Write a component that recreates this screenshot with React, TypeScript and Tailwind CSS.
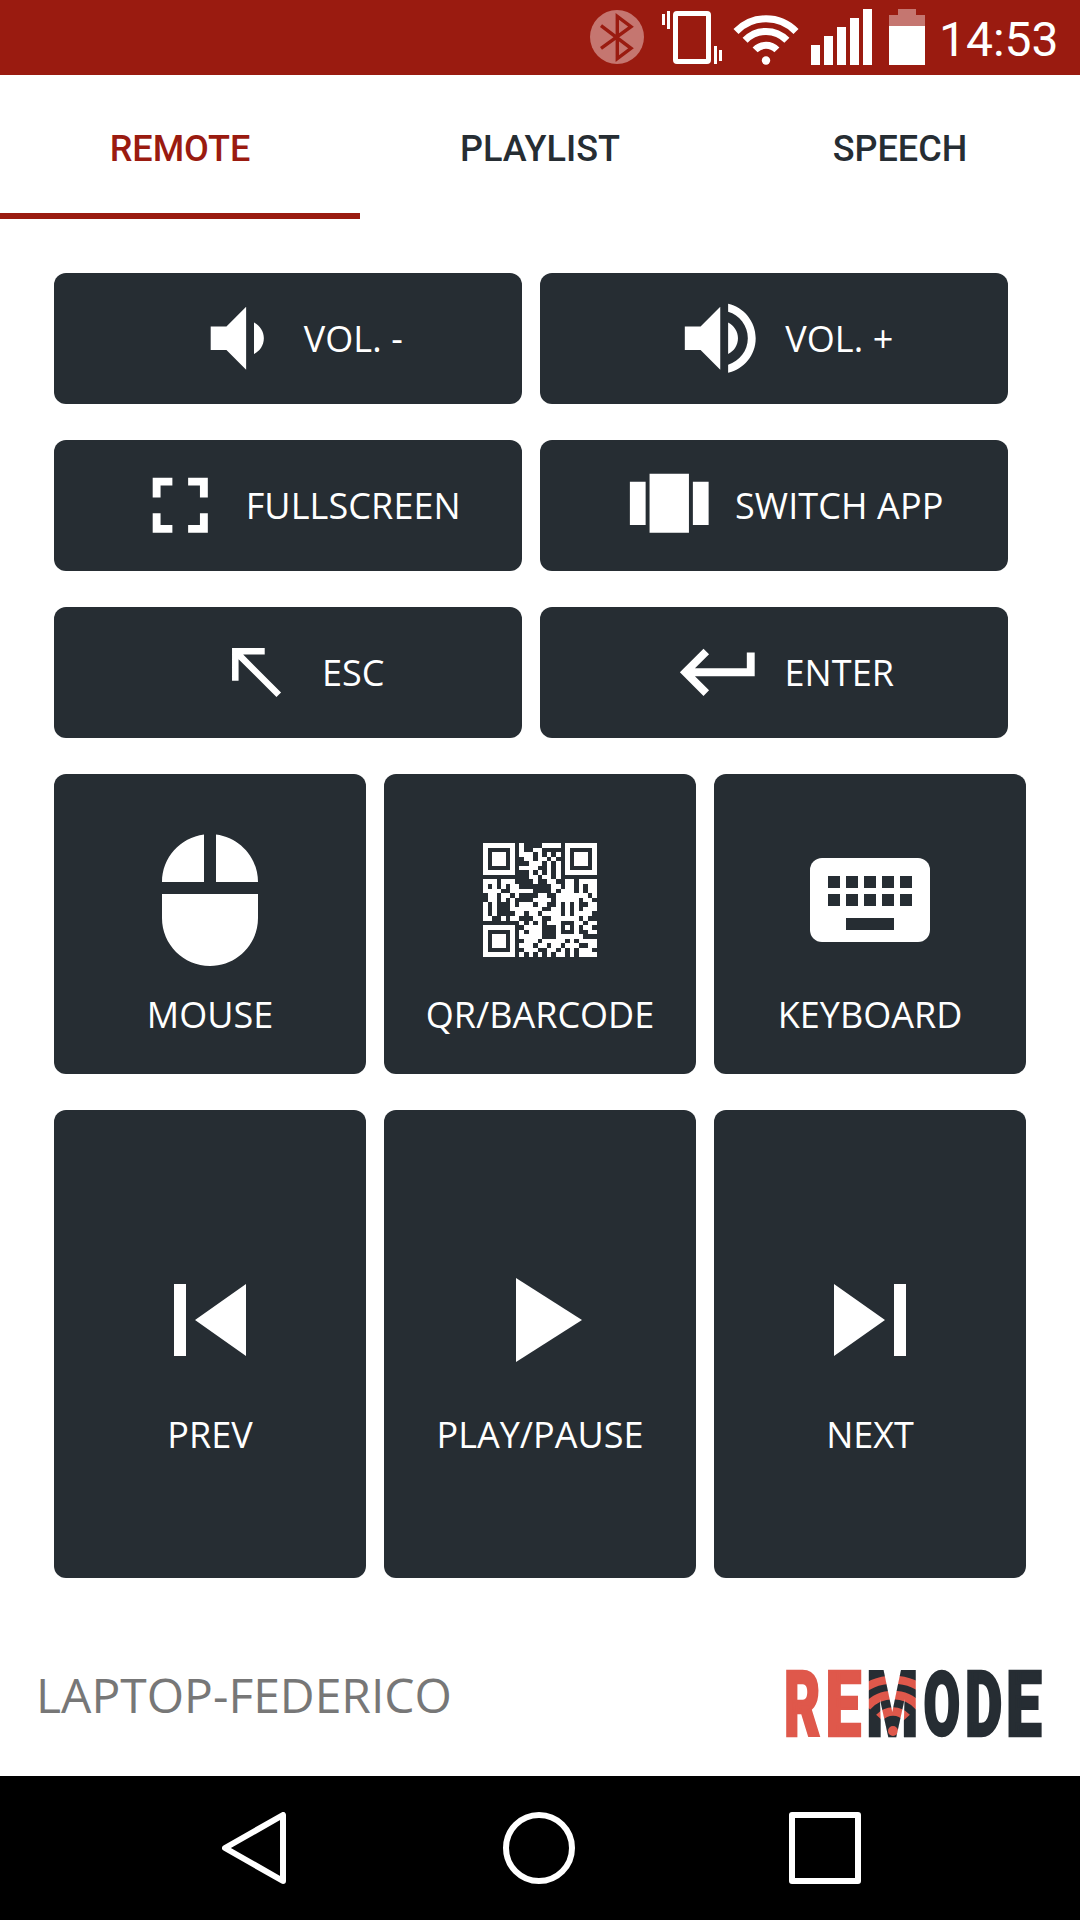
import React from "react";

// 1 = light module, 0 = button background
const QR_ROWS = [
  "1111111010000111101111111",
  "1000001010011000001000001",
  "1011101011101010101011101",
  "1011101001101101001011101",
  "1011101000111010101011101",
  "1000001011110010101000001",
  "1111111000101010101111111",
  "0000000000110110100000000",
  "1110111000010011001101111",
  "1010101100000001101101011",
  "1111001111100001011101011",
  "0110110100001100111111101",
  "0110101000011110111110110",
  "1010001011101100101010011",
  "1010001111111001101010111",
  "1010000110110111101011110",
  "1100101100011001111110100",
  "0000000010101011100011011",
  "1111111001111000101010110",
  "1000001010111000100010011",
  "1011101011111000111111000",
  "1011101001110111110101111",
  "1011101011101101101110011",
  "1000001001110011010101110",
  "1111111010101010110101111",
];

const SIGNAL_BARS = [
  { id: 1, height: "h-[20px]" },
  { id: 2, height: "h-[29px]" },
  { id: 3, height: "h-[38px]" },
  { id: 4, height: "h-[47px]" },
  { id: 5, height: "h-[56px]" },
];

const KEY_COLUMNS = [5, 8, 11, 14, 17];

function StatusBar() {
  return (
    <div className="flex h-[75px] bg-[#9a1b10] pl-[590px] text-white">
      <svg className="mt-[10px] h-[54px] w-[54px] shrink-0" viewBox="0 0 54 54" fill="none">
        <circle cx="27" cy="27" r="27" fill="#c57670" />
        <path d="M11 15.7 41 38.3 27.3 48.5V6.5L41 16.7 11 38.3" stroke="#9a1b10" strokeWidth="3.4" />
      </svg>
      <svg className="ml-[18px] mt-[11px] h-[53px] w-[60px] shrink-0" viewBox="0 0 60 53" fill="currentColor">
        <path d="M0 3h3v11H0zM5 0h3v18H5zM52 35h3v18h-3zM57 39h3v11h-3z" />
        <rect x="13.5" y="2.5" width="33" height="48" rx="1.5" fill="none" stroke="currentColor" strokeWidth="5" />
      </svg>
      <svg className="ml-[11px] mt-[10px] h-[56px] w-[66px] shrink-0" viewBox="0 0 66 56" fill="none" stroke="currentColor" strokeWidth="7">
        <path d="M3 21.5a41.7 41.7 0 0 1 60 0M12.1 30.3a29 29 0 0 1 41.8 0M22.1 39.9a15.2 15.2 0 0 1 21.8 0" />
        <circle cx="33" cy="50.5" r="4.2" fill="currentColor" stroke="none" />
      </svg>
      <div className="ml-[12px] flex h-[65px] items-end gap-[4px]">
        {SIGNAL_BARS.map((bar) => (
          <div key={bar.id} className={`w-[9px] bg-white ${bar.height}`} />
        ))}
      </div>
      <div className="ml-[17px] flex h-[65px] w-[36px] flex-col items-center justify-end">
        <div className="h-[6px] w-[18px] bg-[#c57670]" />
        <div className="h-[11px] w-full bg-[#c57670]" />
        <div className="h-[39px] w-full bg-white" />
      </div>
      <span className="ml-[14px] mt-[12px] font-[Roboto,sans-serif] text-[48px] leading-[56px]">14:53</span>
    </div>
  );
}

function Tabs() {
  const tabs = ["REMOTE", "PLAYLIST", "SPEECH"];
  return (
    <nav className="grid h-[144px] grid-cols-3 font-[Roboto,sans-serif] text-[36px] font-medium">
      {tabs.map((tab, i) => (
        <button
          key={tab}
          className={
            i === 0
              ? "flex items-center justify-center border-b-[6px] border-[#9a1b10] pt-[10px] text-[#9a1b10]"
              : "flex items-center justify-center border-b-[6px] border-transparent pt-[10px] text-[#262d33]"
          }
        >
          {tab}
        </button>
      ))}
    </nav>
  );
}

function WideButton({ label, children }: { label: string; children: React.ReactNode }) {
  return (
    <button className="flex h-[131px] w-[468px] items-center justify-center gap-[18px] rounded-xl bg-[#262d33] pl-[18px]">
      <svg className="h-[94.5px] w-[94.5px]" viewBox="0 0 24 24" fill="currentColor">
        {children}
      </svg>
      <span className="leading-[49px] tracking-[0.1px]">{label}</span>
    </button>
  );
}

function TileButton({ label, children }: { label: string; children: React.ReactNode }) {
  return (
    <button className="flex flex-col items-center justify-center gap-[18px] rounded-xl bg-[#262d33] pt-[18px]">
      <svg className="h-[144px] w-[144px]" viewBox="0 0 24 24" fill="currentColor">
        {children}
      </svg>
      <span className="leading-[49px]">{label}</span>
    </button>
  );
}

function QrCode() {
  // 19 units wide, centred in the 24 unit icon box
  return (
    <g transform="translate(2.5 2.5) scale(0.76)" shapeRendering="crispEdges">
      {QR_ROWS.map((row, y) =>
        row.split("").map((cell, x) =>
          cell === "1" ? <rect key={`${x}-${y}`} x={x} y={y} width="1" height="1" /> : null
        )
      )}
    </g>
  );
}

function Logo() {
  return (
    <svg
      className="mt-[18px] h-[68px] w-[257px] overflow-visible font-[Roboto,sans-serif] text-[90px] font-black"
      viewBox="0 0 257 68"
      strokeWidth="2.6"
      strokeLinejoin="miter"
    >
      <defs>
        <mask id="logo-m" maskUnits="userSpaceOnUse" x="78" y="-4" width="60" height="76">
          <text transform="translate(80.5 65.5) scale(0.655 1)" fill="white" stroke="white">M</text>
        </mask>
      </defs>
      <g fill="#df584b" stroke="#df584b">
        <text transform="translate(-2 65.5) scale(0.62 1)">R</text>
        <text transform="translate(39.5 65.5) scale(0.71 1)">E</text>
      </g>
      <g mask="url(#logo-m)">
        <rect x="78" width="60" height="68" fill="#262d33" />
        <g fill="none" stroke="#df584b">
          <circle cx="107" cy="61" r="2.5" strokeWidth="5" />
          <path d="M93.3 47.7a18.4 18.4 0 0 1 27.4 0" strokeWidth="8.5" />
          <path d="M81 36.6a35 35 0 0 1 52 0" strokeWidth="8.5" />
          <path d="M70 26a50.4 50.4 0 0 1 74 0" strokeWidth="8" />
        </g>
      </g>
      <g fill="#262d33" stroke="#262d33">
        <text transform="translate(137.4 65.2) scale(0.59 0.985)">O</text>
        <text transform="translate(179 65.5) scale(0.64 1)">D</text>
        <text transform="translate(220 65.5) scale(0.71 1)">E</text>
      </g>
    </svg>
  );
}

function NavBar() {
  return (
    <div className="flex h-[144px] items-center bg-black pl-[222px] text-white">
      <svg className="h-[72px] w-[64px]" viewBox="0 0 64 72" fill="none" stroke="currentColor" strokeWidth="6" strokeLinejoin="round">
        <path d="M3 36 61 3V69z" />
      </svg>
      <div className="ml-[217px] h-[72px] w-[72px] rounded-full border-[6px] border-white" />
      <div className="ml-[214px] h-[72px] w-[72px] rounded-[3px] border-[6px] border-white" />
    </div>
  );
}

export default function App() {
  return (
    <div className="flex h-[1920px] w-[1080px] flex-col overflow-hidden bg-white">
      <StatusBar />
      <Tabs />

      <main className="flex flex-col gap-[36px] px-[54px] pt-[54px] font-['Open_Sans',sans-serif] text-[36px] text-white">
        <div className="flex gap-[18px]">
          <WideButton label="VOL. -">
            <path d="M18.5 12c0-1.77-1.02-3.29-2.5-4.03v8.05c1.48-.73 2.5-2.25 2.5-4.02zM5 9v6h4l5 5V4L9 9H5z" />
          </WideButton>
          <WideButton label="VOL. +">
            <path d="M3 9v6h4l5 5V4L7 9H3zm13.5 3c0-1.77-1.02-3.29-2.5-4.03v8.05c1.48-.73 2.5-2.25 2.5-4.02zM14 3.23v2.06c2.89.86 5 3.54 5 6.71s-2.11 5.85-5 6.71v2.06c4.01-.91 7-4.49 7-8.77s-2.99-7.86-7-8.77z" />
          </WideButton>
        </div>
        <div className="flex gap-[18px]">
          <WideButton label="FULLSCREEN">
            <path d="M7 14H5v5h5v-2H7v-3zm-2-4h2V7h3V5H5v5zm12 7h-3v2h5v-5h-2v3zM14 5v2h3v3h2V5h-5z" />
          </WideButton>
          <WideButton label="SWITCH APP">
            <path d="M7 19h10V4H7v15zm-5-2h4V6H2v11zM18 6v11h4V6h-4z" />
          </WideButton>
        </div>
        <div className="flex gap-[18px]">
          <WideButton label="ESC">
            <path d="M15 5v2H8.41L20 18.59 18.59 20 7 8.41V15H5V5z" transform="translate(1.7 1.7) scale(.83)" />
          </WideButton>
          <WideButton label="ENTER">
            <path d="M19 7v4H5.83l3.58-3.59L8 6l-6 6 6 6 1.41-1.41L5.83 13H21V7h-2z" />
          </WideButton>
        </div>

        <div className="grid h-[300px] grid-cols-3 gap-[18px]">
          <TileButton label="MOUSE">
            <path d="M13 1.07V9h7c0-4.08-3.05-7.44-7-7.93zM4 15c0 4.42 3.58 8 8 8s8-3.58 8-8v-4H4v4zm7-13.93C7.05 1.56 4 4.92 4 9h7V1.07z" />
          </TileButton>
          <TileButton label="QR/BARCODE">
            <QrCode />
          </TileButton>
          <TileButton label="KEYBOARD">
            <rect x="2" y="5" width="20" height="14" rx="2" />
            <g fill="#262d33">
              {KEY_COLUMNS.map((x) => (
                <path key={x} d={`M${x} 8h2v2h-2zM${x} 11h2v2h-2z`} />
              ))}
              <path d="M8 15h8v2H8z" />
            </g>
          </TileButton>
        </div>
        <div className="grid h-[468px] grid-cols-3 gap-[18px]">
          <TileButton label="PREV">
            <path d="M6 6h2v12H6zm3.5 6l8.5 6V6z" />
          </TileButton>
          <TileButton label="PLAY/PAUSE">
            <path d="M8 5v14l11-7z" />
          </TileButton>
          <TileButton label="NEXT">
            <path d="M6 18l8.5-6L6 6v12zM16 6v12h2V6h-2z" />
          </TileButton>
        </div>
      </main>

      <footer className="flex flex-1 items-center justify-between pl-[36px] pr-[37px] pt-[35px]">
        <span className="font-['Open_Sans',sans-serif] text-[48px] leading-[66px] text-[#777777]">LAPTOP-FEDERICO</span>
        <Logo />
      </footer>
      <NavBar />
    </div>
  );
}
